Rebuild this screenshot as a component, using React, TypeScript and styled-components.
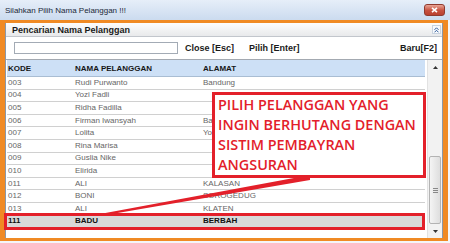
import React from 'react';
import styled, { createGlobalStyle } from 'styled-components';

const GlobalStyle = createGlobalStyle`
  html, body {
    margin: 0;
    padding: 0;
    background: #ffffff;
  }
  body {
    font-family: "Liberation Sans", Arial, sans-serif;
  }
`;

const Window = styled.div`
  position: relative;
  width: 450px;
  height: 243px;
  background: #f4f6f9;
  display: flex;
  flex-direction: column;
  overflow: hidden;
`;

const TitleBar = styled.div`
  flex: none;
  height: 20px;
  display: flex;
  align-items: center;
  justify-content: space-between;
  padding: 0 5px 0 5px;
  background: linear-gradient(#e6eef9, #cbdbef);
  font-size: 8px;
  color: #1b2838;
`;

const CloseButton = styled.div`
  width: 21px;
  height: 12px;
  box-sizing: border-box;
  border: 1px solid #8f3a2f;
  border-radius: 3px;
  background: linear-gradient(#e9a597, #c7513f 55%, #b9402f);
  display: flex;
  align-items: center;
  justify-content: center;
`;

const Frame = styled.div`
  width: 438px;
  height: 215px;
  border: solid #f08a24;
  border-width: 3px 5px 3px 5px;
  display: flex;
`;

const Panel = styled.div`
  flex: 1;
  display: flex;
  flex-direction: column;
  background: #ffffff;
  border-left: 1px solid #8b98a8;
  border-right: 1px solid #8b98a8;
`;

const PanelHeader = styled.div`
  flex: none;
  height: 13px;
  display: flex;
  align-items: center;
  justify-content: space-between;
  padding: 0 1px 0 6px;
  background: linear-gradient(#fdfdfd, #e8e9eb);
  border-bottom: 1px solid #c2c6cc;
  font-size: 9px;
  font-weight: bold;
  color: #1a1a1a;
`;

const CollapseButton = styled.div`
  width: 9px;
  height: 9px;
  box-sizing: border-box;
  border: 1px solid #c9d3df;
  background: #f7f9fc;
  display: flex;
  align-items: center;
  justify-content: center;
`;

const SearchRow = styled.div`
  flex: none;
  height: 22px;
  display: flex;
  align-items: center;
  padding: 0 5px 0 8px;
  font-size: 9px;
  font-weight: bold;
  color: #1a1a1a;
`;

const SearchInput = styled.div`
  width: 164px;
  height: 12px;
  box-sizing: border-box;
  border: 1px solid #a3abb5;
  background: #fff;
  margin-right: 7px;
`;

const Shortcut = styled.span<{ $push?: boolean }>`
  margin-right: ${p => (p.$push ? '0' : '15px')};
  margin-left: ${p => (p.$push ? 'auto' : '0')};
`;

const Grid = styled.div`
  flex: 1;
  display: flex;
  border-top: 1px solid #a3a9b1;
  min-height: 0;
`;

const Table = styled.div`
  flex: 1;
  padding-left: 1px;
  margin-right: 2px;
`;

const columns = '67px 128px 1fr';

const HeaderRow = styled.div`
  height: 17px;
  box-sizing: border-box;
  display: grid;
  grid-template-columns: ${columns};
  align-items: center;
  padding-left: 1px;
  background: #cde0f6;
  border-bottom: 1px solid #a9bdd3;
  font-size: 8px;
  font-weight: bold;
  color: #161616;
`;

const Row = styled.div<{ $selected?: boolean }>`
  position: relative;
  height: 12.6px;
  box-sizing: border-box;
  display: grid;
  grid-template-columns: ${columns};
  align-items: center;
  padding-left: 1px;
  border-bottom: 1px solid #d0d0d0;
  font-size: 8px;
  line-height: 1;
  color: ${p => (p.$selected ? '#111' : '#666')};
  font-weight: ${p => (p.$selected ? 'bold' : 'normal')};
  background: ${p => (p.$selected ? '#d9d9d9' : '#fff')};

  ${p =>
    p.$selected &&
    `
    &::after {
      content: '';
      position: absolute;
      left: -3px;
      right: 0;
      top: -3px;
      bottom: -3px;
      border: 3px solid #e3202a;
    }
  `}
`;

const Scrollbar = styled.div`
  flex: none;
  width: 14px;
  display: flex;
  flex-direction: column;
  align-items: center;
  background: #f2f2f2;
  border-left: 1px solid #e2e2e2;
`;

const ArrowBox = styled.div`
  height: 14px;
  width: 100%;
  display: flex;
  align-items: center;
  justify-content: center;
`;

const Track = styled.div`
  flex: 1;
  width: 100%;
  display: flex;
  flex-direction: column;
  justify-content: flex-end;
`;

const Thumb = styled.div`
  height: 68px;
  margin: 0 1px;
  box-sizing: border-box;
  border: 1px solid #b3b3b3;
  border-radius: 2px;
  background: linear-gradient(90deg, #f4f4f4, #dedede);
  display: flex;
  align-items: center;
  justify-content: center;
`;

const Callout = styled.div`
  position: absolute;
  left: 212px;
  top: 92px;
  width: 214px;
  height: 86px;
  box-sizing: border-box;
  border: 3px solid #e3202a;
  background: #ffffff;
  padding: 0 0 0 3px;
  font-family: "Open Sans", "Liberation Sans", sans-serif;
  font-weight: 600;
  font-size: 14.4px;
  line-height: 20px;
  color: #e3202a;
  white-space: nowrap;
`;

const Pointer = styled.svg`
  position: absolute;
  left: 0;
  top: 0;
  pointer-events: none;
`;

type Pelanggan = { kode: string; nama: string; alamat: string };

// alamat baris 006/007 tertutup kotak catatan, hanya awalnya yang terlihat
const data: Pelanggan[] = [
  { kode: '003', nama: 'Rudi Purwanto', alamat: 'Bandung' },
  { kode: '004', nama: 'Yozi Fadli', alamat: '' },
  { kode: '005', nama: 'Ridha Fadilla', alamat: '' },
  { kode: '006', nama: 'Firman Iwansyah', alamat: 'Ban' },
  { kode: '007', nama: 'Lolita', alamat: 'Yog' },
  { kode: '008', nama: 'Rina Marisa', alamat: '' },
  { kode: '009', nama: 'Guslia Nike', alamat: '' },
  { kode: '010', nama: 'Elirida', alamat: '' },
  { kode: '011', nama: 'ALI', alamat: 'KALASAN' },
  { kode: '012', nama: 'BONI', alamat: 'SOROGEDUG' },
  { kode: '013', nama: 'ALI', alamat: 'KLATEN' },
  { kode: '111', nama: 'BADU', alamat: 'BERBAH' },
];

export default function App() {
  return (
    <>
      <GlobalStyle />
      <Window>
        <TitleBar>
          <span>Silahkan Pilih Nama Pelanggan !!!</span>
          <CloseButton>
            <svg width="7" height="6" viewBox="0 0 7 6">
              <path d="M1 0.8 L6 5.2 M6 0.8 L1 5.2" stroke="#fff" strokeWidth="1.6" />
            </svg>
          </CloseButton>
        </TitleBar>
        <Frame>
          <Panel>
            <PanelHeader>
              <span>Pencarian Nama Pelanggan</span>
              <CollapseButton>
                <svg width="5" height="6" viewBox="0 0 5 6">
                  <path d="M0.5 2.8 L2.5 0.8 L4.5 2.8 M0.5 5.3 L2.5 3.3 L4.5 5.3" stroke="#2d5a9a" strokeWidth="1" fill="none" />
                </svg>
              </CollapseButton>
            </PanelHeader>
            <SearchRow>
              <SearchInput />
              <Shortcut>Close [Esc]</Shortcut>
              <Shortcut>Pilih [Enter]</Shortcut>
              <Shortcut $push>Baru[F2]</Shortcut>
            </SearchRow>
            <Grid>
              <Table>
                <HeaderRow>
                  <span>KODE</span>
                  <span>NAMA PELANGGAN</span>
                  <span>ALAMAT</span>
                </HeaderRow>
                {data.map((p, i) => (
                  <Row key={p.kode} $selected={i === data.length - 1}>
                    <span>{p.kode}</span>
                    <span>{p.nama}</span>
                    <span>{p.alamat}</span>
                  </Row>
                ))}
              </Table>
              <Scrollbar>
                <ArrowBox>
                  <svg width="5" height="3" viewBox="0 0 5 3">
                    <path d="M0 3 L2.5 0 L5 3 Z" fill="#333" />
                  </svg>
                </ArrowBox>
                <Track>
                  <Thumb>
                    <svg width="5" height="5" viewBox="0 0 5 5">
                      <path d="M0 0.5 H5 M0 2.5 H5 M0 4.5 H5" stroke="#888" strokeWidth="1" />
                    </svg>
                  </Thumb>
                </Track>
                <ArrowBox>
                  <svg width="5" height="3" viewBox="0 0 5 3">
                    <path d="M0 0 L2.5 3 L5 0 Z" fill="#333" />
                  </svg>
                </ArrowBox>
              </Scrollbar>
            </Grid>
          </Panel>
        </Frame>
        <Callout>
          PILIH PELANGGAN YANG
          <br />
          INGIN BERHUTANG DENGAN
          <br />
          SISTIM PEMBAYRAN
          <br />
          ANGSURAN
        </Callout>
        <Pointer width="450" height="243" viewBox="0 0 450 243">
          <polygon points="310,175 310,180 100,216 100,214" fill="#e3202a" />
        </Pointer>
      </Window>
    </>
  );
}
